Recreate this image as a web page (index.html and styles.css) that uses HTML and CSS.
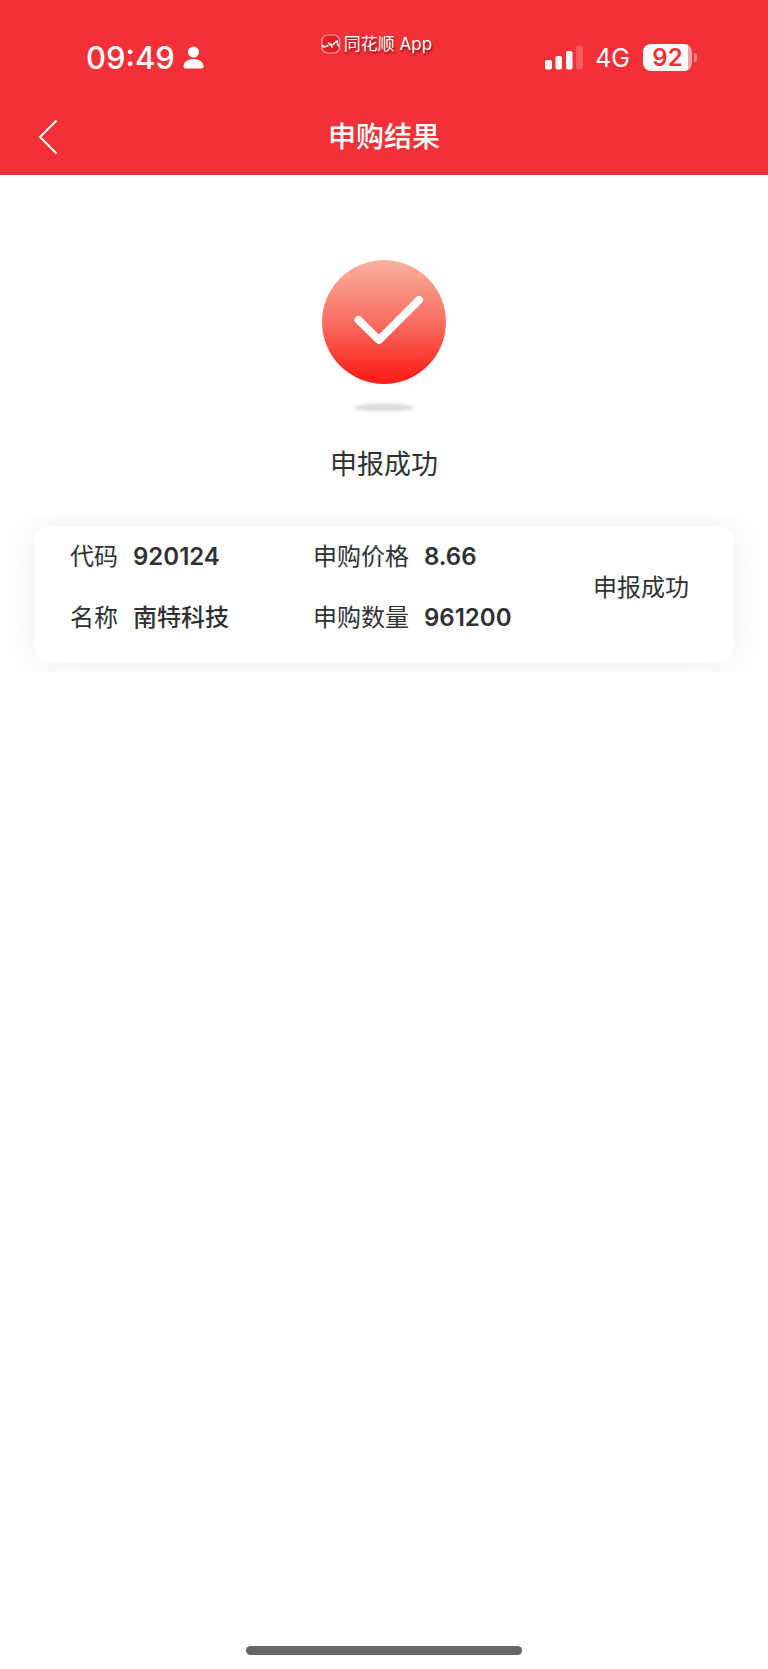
FILE: index.html
```html
<!DOCTYPE html>
<html lang="zh-CN">
<head>
    <meta charset="UTF-8">
    <meta name="viewport" content="width=device-width, initial-scale=1.0">
    <title>申购结果</title>
    <link rel="stylesheet" href="styles.css">
</head>
<body>
    <header class="header">
        <div class="status-bar">
            <div class="status-left">
                <span class="time">09:49</span>
                <svg class="person" viewBox="0 0 21 23" aria-hidden="true">
                    <circle cx="10.500" cy="6" r="5.500" fill="#fff"/>
                    <path d="M0.500 20.500C0.500 16 5 13 10.500 13S20.500 16 20.500 20.500Q20.500 22.500 18.500 22.500H2.500Q0.500 22.500 0.500 20.500Z" fill="#fff"/>
                </svg>
            </div>
            <div class="app-mark">
                <svg class="app-logo" viewBox="0 0 20 20" aria-hidden="true">
                    <rect x="1" y="1" width="17.500" height="18" rx="5.500" fill="#dc2024" stroke="#f9a3a6" stroke-width="1.200"/>
                    <path d="M1.500 11.500L3.500 13M5 12.500L7 11.500M7.500 9L9 10.500M10 10L11 13M12 10.500L14 8.500M16.500 10L17.500 12" fill="none" stroke="#fff" stroke-width="1.600" stroke-linecap="round"/>
                    <path d="M14 7L17 6V9L14.500 9Z" fill="#fff"/>
                </svg>
                <span>同花顺 App</span>
            </div>
            <div class="status-right">
                <svg class="signal" viewBox="0 0 38 25" aria-hidden="true">
                    <rect x="0" y="15" width="7" height="9.500" rx="2" fill="#fff"/>
                    <rect x="10.500" y="11" width="6.500" height="13.500" rx="2" fill="#fff"/>
                    <rect x="21" y="6" width="6.500" height="18.500" rx="2" fill="#fff"/>
                    <rect x="31" y="0.500" width="7" height="24" rx="2" fill="#f65a61"/>
                </svg>
                <span class="network">4G</span>
                <div class="battery">
                    <span class="battery-level">92</span>
                    <span class="battery-tip"></span>
                </div>
            </div>
        </div>
        <nav class="nav-bar">
            <button class="back-button" type="button" aria-label="返回">
                <svg viewBox="0 0 20 36" aria-hidden="true">
                    <path d="M18.500 1.500L2 18L18.500 34.500" fill="none" stroke="#fff" stroke-width="2"/>
                </svg>
            </button>
            <h1>申购结果</h1>
        </nav>
    </header>

    <main class="main">
        <section class="result">
            <svg class="result-icon" viewBox="0 0 124 156" aria-hidden="true">
                <defs>
                    <linearGradient id="circleFill" x1="0" y1="0" x2="0" y2="1">
                        <stop offset="0" stop-color="#f9b49f"/>
                        <stop offset="0.500" stop-color="#f86e62"/>
                        <stop offset="0.920" stop-color="#fa241f"/>
                        <stop offset="1" stop-color="#fb1d19"/>
                    </linearGradient>
                    <filter id="soften" x="-20%" y="-100%" width="140%" height="300%">
                        <feGaussianBlur stdDeviation="1.800"/>
                    </filter>
                </defs>
                <circle cx="62" cy="62" r="62" fill="url(#circleFill)"/>
                <path d="M36.500 60L57 80L97 40" fill="none" stroke="#fff" stroke-width="8" stroke-linecap="round" stroke-linejoin="round"/>
                <ellipse cx="62" cy="147.500" rx="30" ry="4" fill="#dcdcdc" filter="url(#soften)"/>
            </svg>
            <h2>申报成功</h2>
        </section>

        <section class="card-wrap">
            <div class="card">
                <dl class="fields">
                    <div class="field"><dt>代码</dt><dd>920124</dd></div>
                    <div class="field"><dt>名称</dt><dd class="name">南特科技</dd></div>
                </dl>
                <dl class="fields">
                    <div class="field"><dt>申购价格</dt><dd>8.66</dd></div>
                    <div class="field"><dt>申购数量</dt><dd>961200</dd></div>
                </dl>
                <p class="state">申报成功</p>
            </div>
        </section>
    </main>

    <footer class="footer">
        <div class="home-bar"></div>
    </footer>
</body>
</html>
```
FILE: styles.css
```css
* {
    box-sizing: border-box;
}

body {
    margin: 0;
    min-height: 100vh;
    display: flex;
    flex-direction: column;
    font-family: Inter, "Noto Sans CJK SC", sans-serif;
    color: #303133;
    background-color: #fff;
}

h1, h2, p, dl, dd {
    margin: 0;
}

.header {
    background-color: #f23038;
    color: #fff;
}

.status-bar {
    display: grid;
    grid-template-columns: 1fr auto 1fr;
    align-items: center;
    height: 100px;
    padding-top: 15px;
}

.status-left {
    display: flex;
    align-items: center;
    gap: 8px;
    padding-left: 86px;
}

.time {
    font-size: 31px;
    line-height: 40px;
    font-weight: 500;
}

.person {
    width: 21px;
    height: 23px;
}

.app-mark {
    display: flex;
    align-items: center;
    align-self: start;
    gap: 3px;
    padding: 17px 15px 0 0;
    font-size: 17px;
    line-height: 24px;
    text-shadow: 1px 2px 2px rgba(60, 0, 0, 0.6);
}

.app-logo {
    width: 20px;
    height: 20px;
}

.status-right {
    display: flex;
    align-items: center;
    justify-content: flex-end;
    padding-right: 71px;
}

.signal {
    width: 38px;
    height: 25px;
    margin-right: 12px;
}

.network {
    margin-right: 13px;
    font-size: 25px;
    line-height: 32px;
}

.battery {
    display: flex;
    align-items: center;
    gap: 2px;
}

.battery-level {
    width: 49px;
    border-radius: 8px;
    background: linear-gradient(to right, #fff 92%, #f9a0a4 92%);
    color: #f23038;
    font-size: 24px;
    line-height: 27px;
    font-weight: 600;
    text-align: center;
}

.battery-tip {
    width: 3px;
    height: 9px;
    border-radius: 0 4px 4px 0;
    background-color: #f78388;
}

.nav-bar {
    display: grid;
    grid-template-columns: 1fr auto 1fr;
    align-items: center;
    height: 75px;
    padding-bottom: 1px;
}

.back-button {
    justify-self: start;
    display: flex;
    margin-left: 32px;
    padding: 6px;
    border: none;
    background: none;
    cursor: pointer;
}

.back-button svg {
    width: 20px;
    height: 36px;
}

.nav-bar h1 {
    font-size: 28px;
    line-height: 40px;
    font-weight: 500;
}

.main {
    flex: 1;
}

.result {
    display: flex;
    flex-direction: column;
    align-items: center;
    padding-top: 85px;
}

.result-icon {
    width: 124px;
    height: 156px;
}

.result h2 {
    margin-top: 29px;
    font-size: 27px;
    line-height: 40px;
    font-weight: 400;
}

/* the soft shadow is cut off above and below the card */
.card-wrap {
    margin-top: 31px;
    padding: 10px 35px;
    overflow: hidden;
}

.card {
    display: grid;
    grid-template-columns: 243fr 280fr 105fr;
    padding: 13px 35px 26px;
    border-radius: 14px;
    background-color: #fff;
    box-shadow: 0 0 36px rgba(0, 0, 0, 0.08);
    font-size: 24px;
    line-height: 36px;
}

.fields {
    display: flex;
    flex-direction: column;
    gap: 25px;
}

.field {
    display: flex;
    gap: 15px;
}

.field dd {
    font-weight: 600;
}

.field .name {
    font-weight: 500;
}

.state {
    align-self: center;
    white-space: nowrap;
}

.footer {
    display: flex;
    justify-content: center;
    padding-bottom: 14px;
}

.home-bar {
    width: 36%;
    height: 9px;
    border-radius: 5px;
    background-color: #666;
}
```
